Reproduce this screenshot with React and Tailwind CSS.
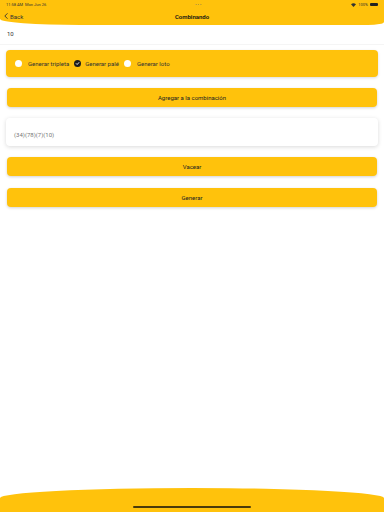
import React from 'react';

function Radio({ checked }) {
  if (checked) {
    return (
      <span className="flex h-[7px] w-[7px] shrink-0 items-center justify-center rounded-full bg-[#1c1c1e]">
        <svg className="h-[5px] w-[5px]" viewBox="0 0 10 10" fill="none" stroke="white" strokeWidth="1.8" strokeLinecap="round" strokeLinejoin="round">
          <path d="M2.5 5.2l1.8 1.8 3.4-3.8" />
        </svg>
      </span>
    );
  }
  return <span className="block h-[7px] w-[7px] shrink-0 rounded-full bg-white" />;
}

function YellowButton({ children }) {
  return (
    <button className="flex h-[19px] w-full items-center justify-center rounded-[4px] bg-[#ffc20c] text-[6px] text-[#222] shadow-[0_1px_3px_rgba(0,0,0,0.18)]">
      {children}
    </button>
  );
}

export default function App() {
  return (
    <div className="relative flex h-[512px] w-[384px] flex-col overflow-hidden bg-white font-['Roboto',sans-serif]">
      {/* Header */}
      <header className="h-[25px] rounded-bl-[80px_6px] rounded-br-[16px_3px] bg-[#ffc20c]">
        <div className="flex h-[9px] items-center justify-between px-[6px] text-[4px] text-[#333]">
          <span>11:58 AM&nbsp;&nbsp;Mon Jun 26</span>
          <span className="tracking-[1px] text-[#666]">•••</span>
          <div className="flex items-center gap-[2px]">
            <svg className="h-[4px] w-[5px]" viewBox="0 0 10 8" fill="#333">
              <path d="M5 8L0 2.5a7.5 7.5 0 0 1 10 0z" />
            </svg>
            <span>100%</span>
            <span className="h-[3px] w-[8px] rounded-[1px] bg-[#222]" />
          </div>
        </div>
        <div className="relative flex h-[14px] items-center">
          <div className="flex items-center gap-[2px] pl-[4px] text-[6px] text-[#333]">
            <svg className="h-[6px] w-[4px]" viewBox="0 0 6 10" fill="none" stroke="#333" strokeWidth="1.5" strokeLinecap="round" strokeLinejoin="round">
              <path d="M5 1L1 5l4 4" />
            </svg>
            <span>Back</span>
          </div>
          <span className="absolute left-1/2 -translate-x-1/2 text-[6px] font-semibold text-[#111]">Combinando</span>
        </div>
      </header>

      <div className="px-[7px] pt-[4px] text-[6px] text-[#333]">10</div>
      <div className="mt-[6px] h-[1px] bg-[#f5f5f5]" />

      <div className="flex flex-col px-[6px] pt-[5px]">
        <div className="flex h-[27px] items-center rounded-[4px] bg-[#ffc20c] px-[9px] text-[6px] text-[#333] shadow-[0_1px_3px_rgba(0,0,0,0.15)]">
          <Radio />
          <span className="ml-[6px]">Generar tripleta</span>
          <span className="ml-[5px] flex"><Radio checked /></span>
          <span className="ml-[4px]">Generar palé</span>
          <span className="ml-[5px] flex"><Radio /></span>
          <span className="ml-[6px]">Generar loto</span>
        </div>

        <div className="mt-[11px] px-[1px]">
          <YellowButton>Agregar a la combinación</YellowButton>
        </div>

        <div className="mt-[11px] flex h-[28px] items-center rounded-[4px] bg-white px-[8px] pt-[4px] text-[6px] text-[#777] shadow-[0_1px_4px_rgba(0,0,0,0.15)]">
          (34)(78)(7)(10)
        </div>

        <div className="mt-[11px] px-[1px]">
          <YellowButton>Vacear</YellowButton>
        </div>

        <div className="mt-[12px] px-[1px]">
          <YellowButton>Generar</YellowButton>
        </div>
      </div>

      {/* Bottom */}
      <div className="mt-auto flex h-[24px] items-end justify-center rounded-t-[50%_10px] bg-[#ffc20c] pb-[4px]">
        <span className="h-[2px] w-[118px] rounded-full bg-[#4a3a0a]" />
      </div>
    </div>
  );
}
